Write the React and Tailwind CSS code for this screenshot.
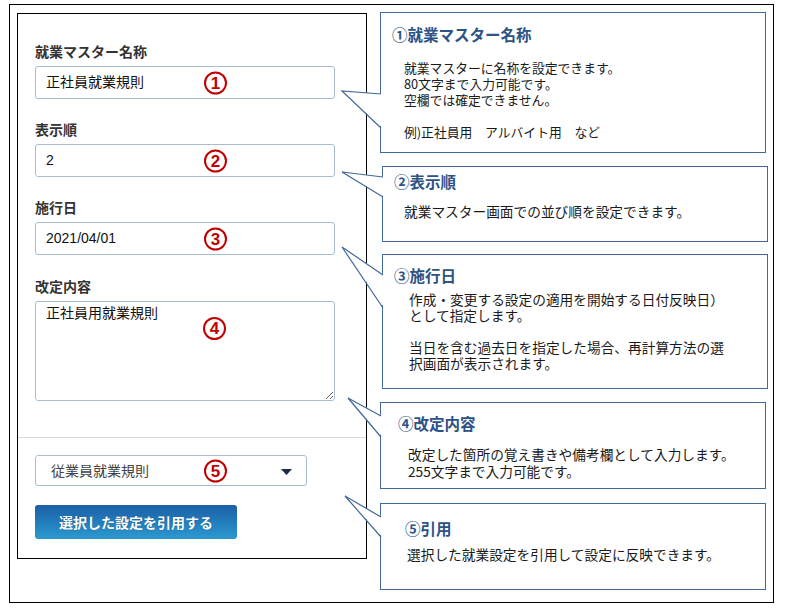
import React from "react";

const jp = { fontFamily: '"Noto Sans CJK JP", "Noto Sans", sans-serif' };
const numFont = { fontFamily: '"Liberation Sans", Arial, sans-serif' };

function Num({ n, className = "top-1/2 -translate-y-1/2" }) {
  return (
    <span
      className={`absolute left-[168px] w-[23px] h-[23px] rounded-full border-[2.5px] border-[#c00000] text-[#c00000] flex items-center justify-center text-[17px] font-bold leading-none ${className}`}
      style={numFont}
    >
      {n}
    </span>
  );
}

function Field({ label, value, n, className = "" }) {
  return (
    <div className={className}>
      <div className="h-5 leading-5 text-[14px] font-bold text-[#333]">{label}</div>
      <div className="relative mt-[5px] w-[300px] h-[33px] border border-[#a9bdd0] rounded-[3px] bg-white flex items-center pl-[10px] text-[14px] text-[#111]">
        <span style={{ fontFamily: '"Liberation Sans", "Noto Sans CJK JP", sans-serif' }}>{value}</span>
        <Num n={n} />
      </div>
    </div>
  );
}

const boxes = [
  {
    title: "①就業マスター名称",
    box: "h-[141px] pl-[11px] pt-[12px]",
    body: "mt-[17px] pl-[12px] text-[12.8px] leading-[16px]",
    lines: ["就業マスターに名称を設定できます。", "80文字まで入力可能です。", "空欄では確定できません。", "", "例)正社員用　アルバイト用　など"],
  },
  {
    title: "②表示順",
    box: "h-[76px] ml-[2px] w-[384px] pl-[11px] pt-[5px] mt-[13px]",
    body: "mt-[13px] pl-[10px] text-[13.7px] leading-[16px]",
    lines: ["就業マスター画面での並び順を設定できます。"],
  },
  {
    title: "③施行日",
    box: "h-[135px] ml-[2px] w-[384px] pl-[11px] pt-[11px] mt-[12px]",
    body: "mt-[7px] pl-[15px] text-[13.7px] leading-[16px]",
    lines: ["作成・変更する設定の適用を開始する日付反映日）", "として指定します。", "", "当日を含む過去日を指定した場合、再計算方法の選", "択画面が表示されます。"],
  },
  {
    title: "④改定内容",
    box: "h-[87px] pl-[17px] pt-[11px] mt-[13px]",
    body: "mt-[14px] pl-[10px] text-[13.7px] leading-[17px]",
    lines: ["改定した箇所の覚え書きや備考欄として入力します。", "255文字まで入力可能です。"],
  },
  {
    title: "⑤引用",
    box: "h-[87px] pl-[24px] pt-[15px] mt-[14px]",
    body: "mt-[9px] pl-[2px] text-[13.7px] leading-[16px]",
    lines: ["選択した就業設定を引用して設定に反映できます。"],
  },
];

// tail coordinates relative to the frame's padding box (page x-10, y-5)
const tails = [
  [[332, 86], [371, 89], [371, 123]],
  [[332, 167], [373, 172], [373, 192]],
  [[332, 242], [373, 270], [373, 303]],
  [[338, 393], [371, 411], [371, 432]],
  [[335, 491], [371, 512], [371, 532]],
];

export default function App() {
  return (
    <div className="w-[788px] h-[610px] bg-white pt-[4px] pl-[9px]" style={jp}>
      <div className="relative w-[765px] h-[599px] border border-black flex items-start pl-[7px] pt-[8px]">
        {/* form panel */}
        <div className="w-[350px] h-[546px] border border-black bg-white flex flex-col">
          <div className="pl-[17px] pt-[27px] pb-[36px]">
            <Field label="就業マスター名称" value="正社員就業規則" n="1" />
            <Field label="表示順" value="2" n="2" className="mt-[20px]" />
            <Field label="施行日" value="2021/04/01" n="3" className="mt-[20px]" />
            <div className="mt-[21px]">
              <div className="h-5 leading-5 text-[14px] font-bold text-[#333]">改定内容</div>
              <div className="relative mt-[5px] w-[300px] h-[100px]">
                <textarea
                  readOnly
                  defaultValue="正社員用就業規則"
                  className="w-full h-full border border-[#a9bdd0] rounded-[3px] pl-[10px] pt-0 text-[14px] leading-[20px] text-[#111] outline-none resize-y"
                  style={jp}
                />
                <Num n="4" className="top-[16px]" />
              </div>
            </div>
          </div>
          <div className="border-t border-[#d9d9d9] pl-[17px] pt-[17px]">
            <div className="relative w-[272px] h-[31px] border border-[#a9bdd0] rounded-[3px] flex items-center pl-[15px] text-[14px] text-[#444]">
              <span>従業員就業規則</span>
              <Num n="5" />
              <svg className="absolute right-[14px] top-[13px]" width="11" height="6" viewBox="0 0 11 6">
                <path d="M0 0h11L5.5 6z" fill="#1b2a47" />
              </svg>
            </div>
            <button className="mt-[19px] w-[202px] h-[34px] rounded-[3px] bg-linear-to-b from-[#1b5fa6] to-[#2c9ad0] text-white text-[14px] font-bold [text-shadow:0_0_1px_rgba(0,0,0,0.4)]">
              選択した設定を引用する
            </button>
          </div>
        </div>

        {/* callouts */}
        <div className="ml-[13px] mt-[-1px] flex flex-col">
          {boxes.map((b, i) => (
            <div key={i} className={`w-[386px] border border-[#41699a] bg-white ${b.box}`}>
              <div className="h-[18px] leading-[18px] text-[15.5px] font-bold text-[#2d5286]">{b.title}</div>
              <div className={`text-[#1a1a1a] whitespace-nowrap ${b.body}`}>
                {b.lines.map((l, j) => (
                  <div key={j}>{l || "\u00a0"}</div>
                ))}
              </div>
            </div>
          ))}
        </div>

        {/* callout tails */}
        <svg className="absolute inset-0 pointer-events-none" width="763" height="597">
          {tails.map(([tip, a, b], i) => (
            <g key={i}>
              <polygon points={`${tip[0]},${tip[1]} ${a[0] + 1.5},${a[1]} ${b[0] + 1.5},${b[1]}`} fill="white" />
              <polyline points={`${a[0]},${a[1]} ${tip[0]},${tip[1]} ${b[0]},${b[1]}`} fill="none" stroke="#41699a" strokeWidth="1.2" />
            </g>
          ))}
        </svg>
      </div>
    </div>
  );
}
